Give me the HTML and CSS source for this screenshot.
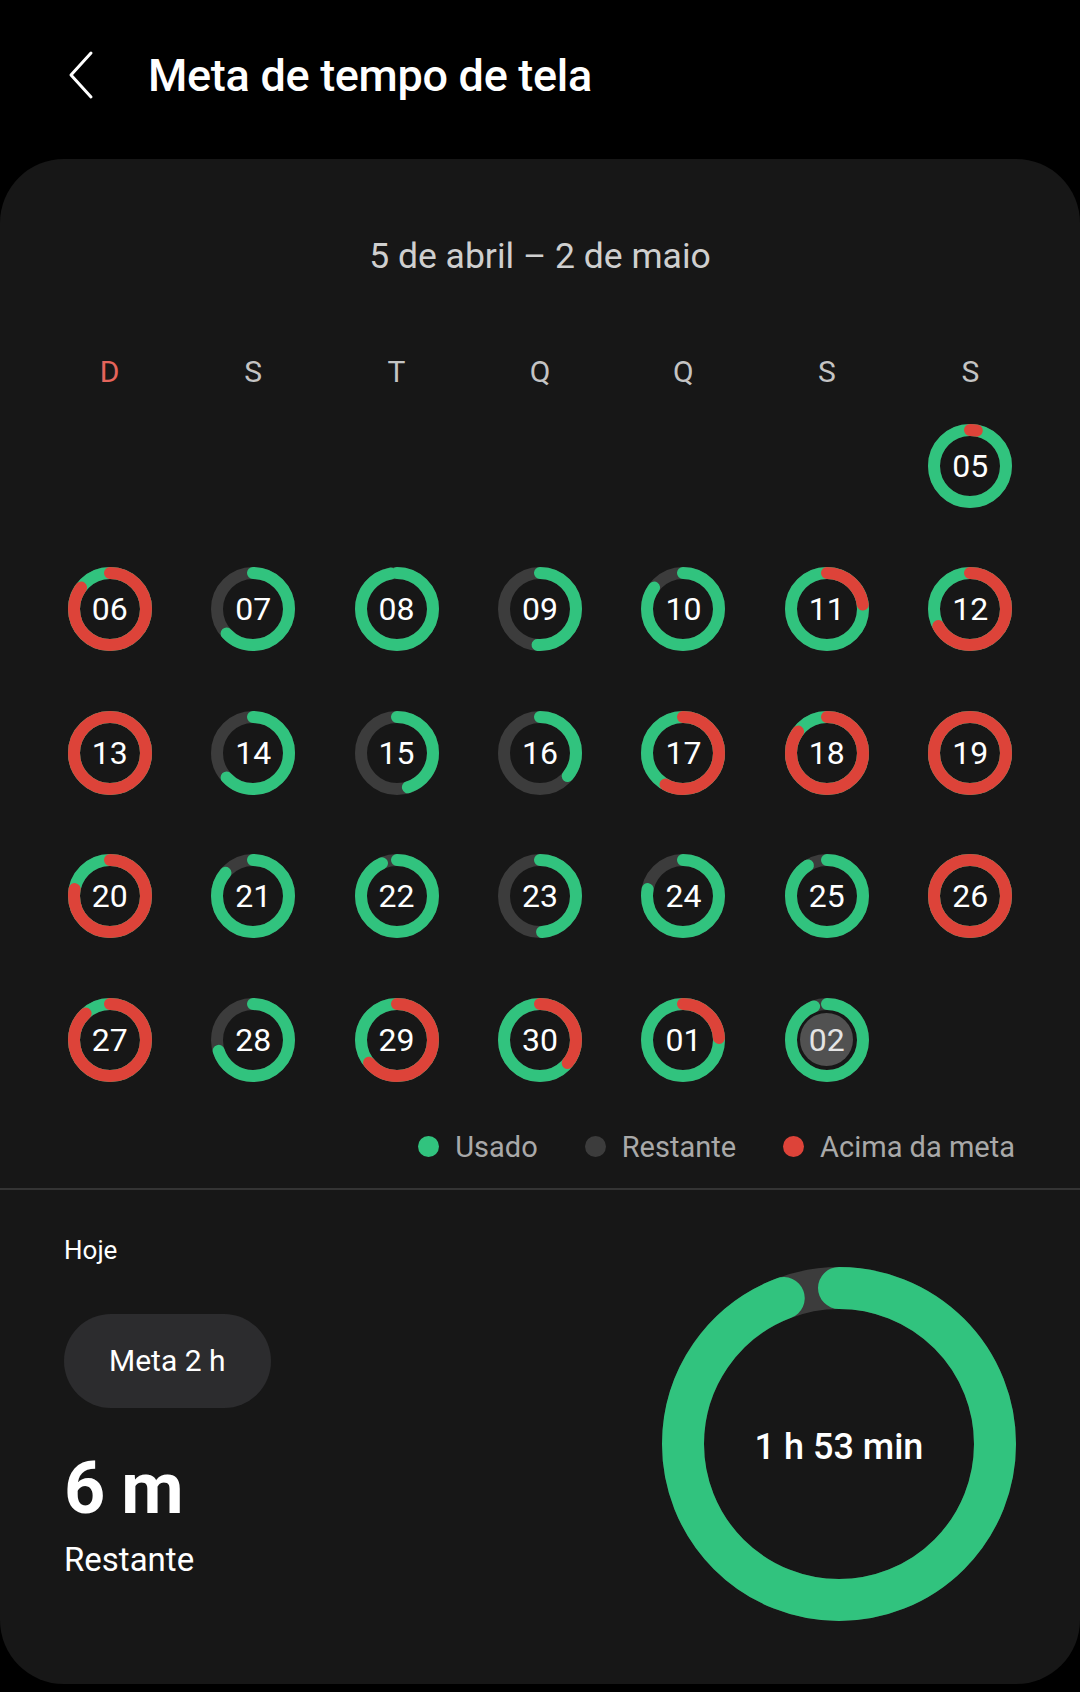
FILE: index.html
```html
<!DOCTYPE html>
<html lang="pt">
<head>
    <meta charset="UTF-8">
    <meta name="viewport" content="width=device-width, initial-scale=1.0">
    <title>Meta de tempo de tela</title>
    <link rel="stylesheet" href="styles.css">
</head>
<body>

<div class="header">
    <svg class="back" width="30" height="50" viewBox="0 0 30 50">
        <path d="M25 3 L5 25 L25 47" fill="none" stroke="#fff" stroke-width="3" stroke-linecap="round" stroke-linejoin="round"/>
    </svg>
    <h1>Meta de tempo de tela</h1>
</div>

<div class="card">
    <div class="range">5 de abril – 2 de maio</div>

    <div class="weekdays">
        <span class="sun">D</span><span>S</span><span>T</span><span>Q</span><span>Q</span><span>S</span><span>S</span>
    </div>

    <div class="grid" id="grid"></div>

    <div class="legend">
        <div class="legend-item"><span class="dot used"></span>Usado</div>
        <div class="legend-item"><span class="dot left"></span>Restante</div>
        <div class="legend-item"><span class="dot over"></span>Acima da meta</div>
    </div>

    <div class="divider"></div>

    <div class="today">
        <div class="today-info">
            <div class="today-label">Hoje</div>
            <div class="goal-pill">Meta 2 h</div>
            <div class="remaining">6 m</div>
            <div class="remaining-label">Restante</div>
        </div>
        <div class="big-ring">
            <svg width="354" height="354" viewBox="0 0 354 354">
                <g transform="rotate(-90 177 177)">
                    <circle class="big-track" cx="177" cy="177" r="156"/>
                    <circle class="big-used" cx="177" cy="177" r="156" stroke-dasharray="923.3 980.2"/>
                </g>
            </svg>
            <div class="big-text">1 h 53 min</div>
        </div>
    </div>
</div>

<script>
    // usage / goal for each day, starting on sunday
    var days = [
        null, null, null, null, null, null, ["05", 1.03],
        ["06", 1.85], ["07", 0.63], ["08", 0.97], ["09", 0.51], ["10", 0.85], ["11", 1.23], ["12", 1.67],
        ["13", 2], ["14", 0.63], ["15", 0.45], ["16", 0.36], ["17", 1.58], ["18", 1.85], ["19", 2],
        ["20", 1.78], ["21", 0.86], ["22", 0.93], ["23", 0.49], ["24", 0.78], ["25", 0.91], ["26", 2],
        ["27", 1.88], ["28", 0.70], ["29", 1.64], ["30", 1.36], ["01", 1.24], ["02", 0.94, true]
    ];

    var C = 2 * Math.PI * 36;

    function arc(cls, frac) {
        if (frac >= 1) {
            return '<circle class="' + cls + '" cx="42" cy="42" r="36"/>';
        }
        return '<circle class="' + cls + ' cap" cx="42" cy="42" r="36" stroke-dasharray="' + (frac * C).toFixed(1) + ' ' + C.toFixed(1) + '"/>';
    }

    var grid = document.getElementById("grid");
    days.forEach(function(day) {
        var cell = document.createElement("div");
        cell.className = "day";
        if (day) {
            var ratio = day[1];
            var svg = '<svg width="84" height="84" viewBox="0 0 84 84"><g transform="rotate(-90 42 42)">';
            svg += '<circle class="track" cx="42" cy="42" r="36"/>';
            svg += arc("used", Math.min(ratio, 1));
            if (ratio > 1) {
                svg += arc("over", ratio - 1);
            }
            svg += '</g></svg>';
            if (day[2]) {
                cell.classList.add("current");
                svg += '<span class="fill"></span>';
            }
            cell.innerHTML = svg + '<span class="num">' + day[0] + '</span>';
        }
        grid.appendChild(cell);
    });
</script>
</body>
</html>
```

FILE: styles.css
```css
body {
    margin: 0;
    background-color: #000;
    color: #fff;
    font-family: Roboto, "Noto Sans", sans-serif;
}

.header {
    display: flex;
    align-items: center;
    height: 150px;
    padding-left: 66px;
    gap: 52px;
}
.header h1 {
    margin: 0;
    font-size: 45px;
    font-weight: 500;
    letter-spacing: -0.3px;
}

.card {
    margin-top: 9px;
    background-color: #171717;
    border-radius: 64px;
    padding-top: 75px;
}

.range {
    text-align: center;
    font-size: 35.5px;
    line-height: 44px;
    color: #cfcfcf;
}

.weekdays, .grid {
    display: grid;
    grid-template-columns: repeat(7, 1fr);
    padding: 0 38px;
}
.weekdays {
    margin-top: 72px;
    line-height: 44px;
    font-size: 30px;
    text-align: center;
    color: #c4c4c4;
}
.weekdays .sun {
    color: #e5645b;
}

.grid {
    grid-auto-rows: 143.5px;
}
.day {
    display: grid;
    place-items: center;
}
.day > * {
    grid-area: 1 / 1;
}
.day circle {
    fill: none;
    stroke-width: 12;
}
.day .track {
    stroke: #3c3c3c;
}
.used, .big-used {
    stroke: #31c37e;
}
.over {
    stroke: #dd4339;
}
.cap {
    stroke-linecap: round;
}
.num {
    font-size: 32px;
    color: #fff;
}
.current .fill {
    width: 53px;
    height: 53px;
    border-radius: 50%;
    background-color: #515151;
}
.current .num {
    color: #e4e4e4;
}

.legend {
    display: flex;
    justify-content: flex-end;
    align-items: center;
    gap: 47px;
    height: 40px;
    margin-top: 15px;
    padding-right: 65px;
    font-size: 29px;
    color: #a9a9a9;
}
.legend-item {
    display: flex;
    align-items: center;
    gap: 16px;
}
.dot {
    width: 21px;
    height: 21px;
    border-radius: 50%;
}
.dot.used { background-color: #31c37e; }
.dot.left { background-color: #3c3c3c; }
.dot.over { background-color: #dd4339; }

.divider {
    height: 2px;
    margin-top: 21px;
    background-color: #343434;
}

.today {
    display: flex;
    justify-content: space-between;
    padding: 42px 64px 63px 64px;
}
.today-label {
    font-size: 26px;
    line-height: 36px;
}
.goal-pill {
    display: inline-block;
    margin-top: 46px;
    padding: 0 45px;
    height: 94px;
    line-height: 94px;
    border-radius: 47px;
    background-color: #2c2c2e;
    font-size: 30px;
}
.remaining {
    margin-top: 43px;
    font-size: 72px;
    font-weight: 700;
    line-height: 76px;
    letter-spacing: -1px;
}
.remaining-label {
    margin-top: 13px;
    font-size: 33px;
    line-height: 40px;
}

.big-ring {
    display: grid;
    place-items: center;
    margin-top: 35px;
}
.big-ring > * {
    grid-area: 1 / 1;
}
.big-ring circle {
    fill: none;
    stroke-width: 42;
}
.big-track {
    stroke: #3c3c3c;
}
.big-used {
    stroke-linecap: round;
}
.big-text {
    padding-top: 6px;
    font-size: 36px;
    font-weight: 500;
}
```
